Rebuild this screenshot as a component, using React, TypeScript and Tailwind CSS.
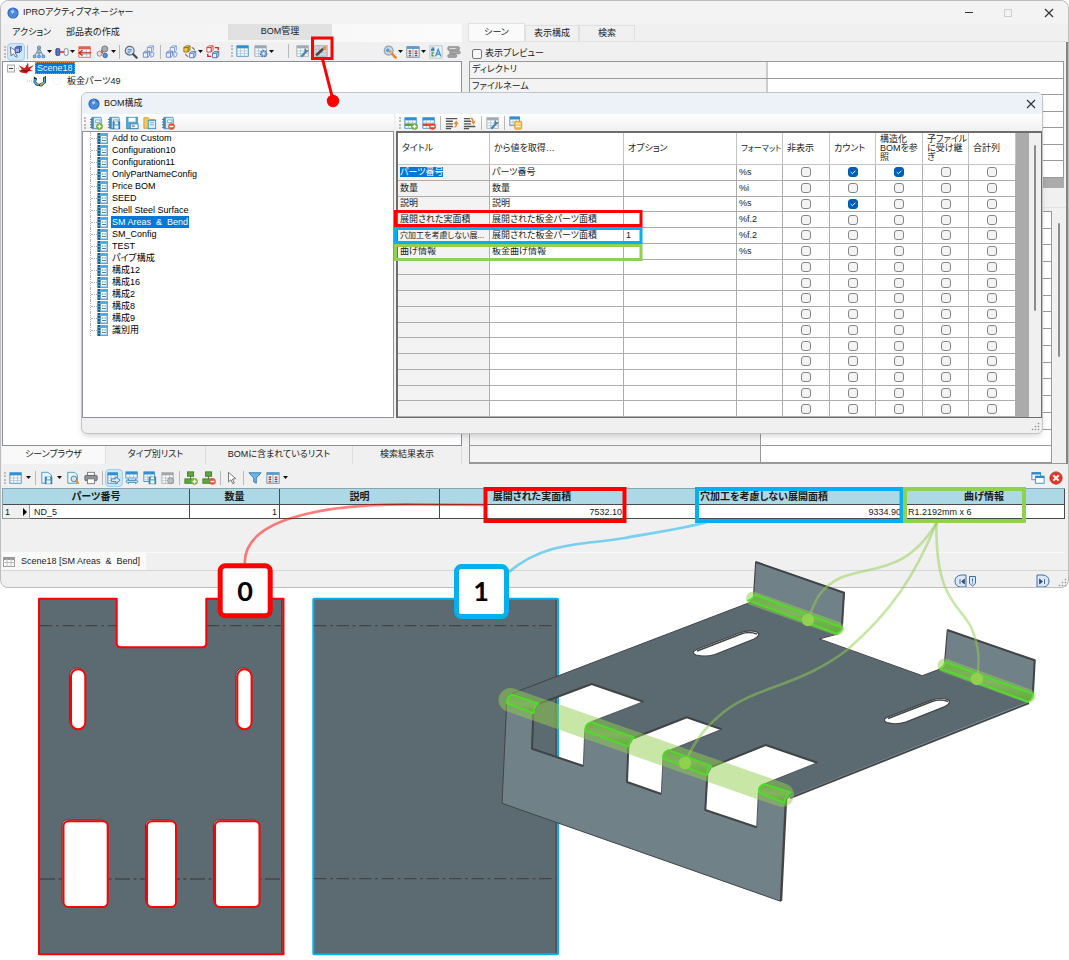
import React from "react";

type IconName =
  | "select" | "assembly" | "link" | "rowRed" | "gears" | "magnify" | "cubes" | "cubesYellow" | "cubesRed"
  | "table" | "tableGear" | "tableWrench" | "wand" | "searchColor" | "tableSort" | "abc" | "stack"
  | "bookAdd" | "bookSave" | "save" | "folderBook" | "bookDel"
  | "tableAdd" | "tableDel" | "moveUp" | "moveDown" | "tableCopy"
  | "saveTable" | "preview" | "print" | "export" | "tableWide" | "tableSave" | "tableGray"
  | "treeAdd" | "treeDel" | "cursor" | "filter" | "windows" | "closeRed";

const Grid = ({ c = "#2f8fd0", x = 1, y = 2, w = 13, h = 12 }) => (
  <g>
    <rect x={x} y={y} width={w} height={h} fill="#fff" stroke={c} />
    <rect x={x} y={y} width={w} height="3" fill={c} />
    <path d={`M${x} ${y + 6}h${w}M${x} ${y + 9}h${w}M${x + w / 3} ${y + 3}v${h - 3}M${x + (2 * w) / 3} ${y + 3}v${h - 3}`} stroke="#a9c4d8" fill="none" />
  </g>
);
const Badge = ({ c, plus = false }: { c: string; plus?: boolean }) => (
  <g>
    <circle cx="12" cy="12" r="3.8" fill={c} />
    <path d={plus ? "M9.8 12h4.4M12 9.8v4.4" : "M9.8 12h4.4"} stroke="#fff" strokeWidth="1.5" />
  </g>
);
const Book = () => (
  <g>
    <rect x="3" y="1.5" width="11" height="13" rx="1" fill="#d8ecf8" stroke="#3d8fc4" />
    <rect x="3" y="1.5" width="2.5" height="13" fill="#3d8fc4" />
    <path d="M1 4h3M1 7h3M1 10h3M1 13h3" stroke="#4b6a80" />
    <path d="M7.500 4.500h5v3h-5z" fill="#fff" stroke="#6caed8" />
  </g>
);
const Cube = ({ x, y, c, f = "#eef3fc" }: { x: number; y: number; c: string; f?: string }) => (
  <g stroke={c} fill={f} strokeLinejoin="round">
    <path d={`M${x} ${y + 2}l2-2h5l-2 2z`} />
    <path d={`M${x} ${y + 2}h5v5h-5z`} />
    <path d={`M${x + 5} ${y + 2}l2-2v5l-2 2z`} />
  </g>
);
const Floppy = ({ x, y, s = 8 }: { x: number; y: number; s?: number }) => (
  <g>
    <rect x={x} y={y} width={s} height={s} fill="#4a9fd6" stroke="#2b6f9f" />
    <rect x={x + 2} y={y} width={s - 4} height={s / 3} fill="#fff" />
    <rect x={x + 1.5} y={y + s / 2} width={s - 3} height={s / 2} fill="#e6f2fa" />
  </g>
);
const Wrench = () => (
  <g>
    <path d="M6 14.500l6-6.500" stroke="#4788b5" strokeWidth="2.600" />
    <path d="M11 9.500a3 3 0 0 1 0-5l1 2.500 2.500-.5a3 3 0 0 1-3.500 3z" fill="#5d7f96" />
  </g>
);

const icons: Record<IconName, React.ReactNode> = {
  select: (
    <g>
      <path d="M1.500 2.500l1 10 2.500-2.500 3 4 1.500-1-2.500-4 3.500-.5z" fill="#fff" stroke="#4f6076" />
      <Cube x={7} y={1.500} c="#2b46a4" f="#9fb2ea" />
    </g>
  ),
  assembly: (
    <g fill="none" stroke="#6b8fb0" strokeWidth="1.200">
      <path d="M8 3L3 13M8 3l5 10M8 3v10M5 9h6" />
      <g fill="#7fb1d8"><circle cx="8" cy="3" r="1.800" /><circle cx="3" cy="13" r="1.600" /><circle cx="8" cy="13" r="1.600" /><circle cx="13" cy="13" r="1.600" /></g>
    </g>
  ),
  link: (
    <g>
      <rect x="1" y="4" width="4.500" height="8" rx="1.500" fill="#5474c8" stroke="#30427a" />
      <path d="M5.500 8h5" stroke="#d0453b" strokeWidth="2" />
      <rect x="10.500" y="4" width="4.500" height="8" rx="2" fill="#eef1f7" stroke="#7a8696" />
    </g>
  ),
  rowRed: (
    <g>
      <Grid c="#e0604c" />
      <path d="M1 9h14M5 6l-4 3 4 3" stroke="#d02a1c" strokeWidth="1.600" fill="none" />
    </g>
  ),
  gears: (
    <g>
      <circle cx="10" cy="4.500" r="3.500" fill="#a9adb2" stroke="#6e7276" />
      <circle cx="4" cy="10" r="2.800" fill="#dfe3e8" stroke="#7b8794" />
      <circle cx="10.500" cy="12" r="2.500" fill="#5f93d6" stroke="#2d5b9e" />
      <path d="M6 6l2 4" stroke="#c9472e" strokeWidth="1.500" />
    </g>
  ),
  magnify: (
    <g>
      <circle cx="6.500" cy="6.500" r="5" fill="#dceefb" stroke="#5e6f80" strokeWidth="1.400" />
      <path d="M4 5h5M4 7h5M4 9h3" stroke="#4576aa" />
      <path d="M10.500 10.500l4 4" stroke="#3f4d5c" strokeWidth="2.600" strokeLinecap="round" />
    </g>
  ),
  cubes: (<g><Cube x={6} y={1} c="#7f9ad6" /><Cube x={1.500} y={7} c="#6484cb" /><path d="M10 8l4 1-1 4-3 1z" fill="#e3eafa" stroke="#7f9ad6" /></g>),
  cubesYellow: (<g><Cube x={1} y={1} c="#8c6d10" f="#f7cf3f" /><Cube x={7.500} y={7.500} c="#4e74c5" /><path d="M10 3q3 0 3 3M6 13q-3 0-3-3" stroke="#444" fill="none" /></g>),
  cubesRed: (<g><Cube x={1} y={1} c="#c8382c" f="#fff" /><Cube x={7.500} y={7.500} c="#3d63ba" /><path d="M10 3h4v3M6 13H2v-3" stroke="#d0281c" strokeWidth="1.500" fill="none" /></g>),
  table: <Grid />,
  tableGear: (
    <g>
      <Grid c="#9aa8b3" />
      <circle cx="11" cy="11" r="3.500" fill="#8fb2e0" stroke="#4e7ab5" strokeDasharray="2 1" strokeWidth="1.600" />
      <circle cx="11" cy="11" r="1.200" fill="#fff" />
    </g>
  ),
  tableWrench: (<g><Grid c="#a3abb2" /><Wrench /></g>),
  wand: (
    <g>
      <rect x="1" y="2" width="14" height="12" fill="#d3d8dc" stroke="#a0a7ad" />
      <path d="M1 6h14M1 10h14M6 2v12" stroke="#b7bec4" />
      <path d="M2.500 13L10.500 5.500" stroke="#44494d" strokeWidth="3" />
      <path d="M9.500 4l4.500-2-.5 4.500-2.500 1z" fill="#f08a2a" />
    </g>
  ),
  searchColor: (
    <g>
      <circle cx="6.500" cy="6.500" r="5" fill="#bfe0f6" stroke="#9ba7b2" strokeWidth="1.600" />
      <circle cx="5.500" cy="6" r="2" fill="#4c9bdc" /><circle cx="8" cy="7.500" r="1.800" fill="#f09a3a" />
      <path d="M10.500 10.500l4 4" stroke="#e08a2b" strokeWidth="2.800" strokeLinecap="round" />
    </g>
  ),
  tableSort: (
    <g>
      <rect x="1" y="2" width="14" height="12" fill="#f7fbfe" stroke="#6f8797" />
      <rect x="1" y="1.500" width="14" height="3" fill="#5b9bd0" />
      <path d="M8 4.500V14" stroke="#7f93a2" />
      <path d="M3 7h3M3 12h3" stroke="#c84c3c" strokeWidth="2" />
      <path d="M3 9.500h3M10 12h3" stroke="#37619c" strokeWidth="1.600" />
      <path d="M10 7h3M10 9.500h3" stroke="#a8383c" strokeWidth="1.600" />
    </g>
  ),
  abc: (
    <g fill="none">
      <rect x="1" y="1" width="14" height="14" fill="#eef3f7" stroke="#b4bdc5" />
      <path d="M7.500 13L10.500 5l3 8M8.500 10.500h4" stroke="#2f8fd8" strokeWidth="1.500" />
      <path d="M3 3.500h2.500v3H3V5h2.500" stroke="#3a75b8" strokeWidth="1.200" />
      <path d="M6 9H3.500v3.500H6" stroke="#4aa03a" strokeWidth="1.400" />
    </g>
  ),
  stack: (
    <g fill="#a8a8a8" stroke="#858585">
      <rect x="1" y="2" width="13" height="4" rx="1" /><rect x="3" y="7" width="12" height="3" rx="1" /><rect x="1" y="11" width="10" height="3" rx="1" />
      <path d="M3 4h7" stroke="#e6e6e6" />
    </g>
  ),
  bookAdd: (<g><Book /><Badge c="#6aa82e" plus /></g>),
  bookSave: (<g><Book /><Floppy x={7} y={7} s={7.500} /></g>),
  save: (<g><rect x="2" y="1.500" width="12" height="13" fill="#5aa9dc" stroke="#3480b4" /><rect x="4" y="2" width="8" height="4.500" fill="#fff" /><rect x="6" y="9" width="9" height="5.500" fill="#eaf4fb" stroke="#3480b4" /><path d="M8 11.500h3" stroke="#333" /></g>),
  folderBook: (<g><path d="M1 2h5l1.500 2H14v10H1z" fill="#f6c65b" stroke="#d59a2a" /><rect x="6" y="5" width="8.500" height="9.500" fill="#d8ecf8" stroke="#3d8fc4" /><path d="M8 7.500h4.500M8 10h4.500" stroke="#6caed8" /></g>),
  bookDel: (<g><Book /><Badge c="#dd5538" /></g>),
  tableAdd: (<g><Grid /><path d="M1 10h8" stroke="#58a22c" strokeWidth="3" /><Badge c="#6aa82e" plus /></g>),
  tableDel: (<g><Grid /><path d="M1 10h8" stroke="#e0452e" strokeWidth="3" /><Badge c="#e0452e" /></g>),
  moveUp: (<g><path d="M1 3h13M1 6h8M1 9h8M1 12h8M1 14.500h6" stroke="#555" strokeWidth="1.500" /><path d="M8 13q4 0 4-4h-2.500l3.500-4 2.500 4H14q0 5-6 4z" fill="#ee8a2c" /></g>),
  moveDown: (<g><path d="M1 3h7M1 6h8M1 9h8M1 12h13M1 14.500h6" stroke="#555" strokeWidth="1.500" /><path d="M8 2q4-1 4 4h2.500L12 10 9 6h1.500q0-2-2.500-4z" fill="#ee8a2c" /></g>),
  tableCopy: (<g><Grid w={11} h={10} x={1} y={1} /><rect x="6.500" y="6" width="8" height="9" rx="1" fill="#f8c257" stroke="#e09a2c" /><path d="M8 9h5M8 12h5" stroke="#fff" /></g>),
  saveTable: (<g><path d="M2 1.500h7l4 3V14H2z" fill="#e8f3fb" stroke="#3e93c8" /><Floppy x={6} y={7} s={7.500} /></g>),
  preview: (<g><path d="M2 1.500h8l3 3V14H2z" fill="#e8f3fb" stroke="#3e93c8" /><circle cx="9" cy="9" r="3.200" fill="#cfe7f7" stroke="#47769a" /><path d="M11 11l3.500 3.500" stroke="#e08a2b" strokeWidth="2" /></g>),
  print: (<g><rect x="4" y="1.500" width="8" height="4" fill="#fff" stroke="#777" /><rect x="1" y="5" width="14" height="6" rx="1" fill="#8d9297" stroke="#5f6468" /><rect x="4" y="9" width="8" height="5.500" fill="#fff" stroke="#777" /></g>),
  export: (<g><Grid w={11} /><path d="M5 9h5V6.500l5 4-5 4V12H5z" fill="#d8ecf9" stroke="#2b7fb8" /></g>),
  tableWide: (<g><Grid h={7} y={1} /><path d="M1 12l3-2.500V11h8V9.500l3 2.500-3 2.500V13H4v1.500z" fill="#d8ecf9" stroke="#2b7fb8" /></g>),
  tableSave: (<g><Grid w={12} h={11} y={1} /><Floppy x={7} y={7} s={7.500} /></g>),
  tableGray: (<g><Grid c="#a6a6a6" /><circle cx="11" cy="11" r="3.500" fill="#bdbdbd" stroke="#8f8f8f" /></g>),
  treeAdd: (<g><rect x="4" y="1" width="7" height="5" fill="#5da83c" stroke="#3d7c24" /><path d="M7.500 6v3" stroke="#555" /><rect x="1" y="9" width="12" height="5" fill="#5da83c" stroke="#3d7c24" /><Badge c="#7cb52e" plus /></g>),
  treeDel: (<g><rect x="4" y="1" width="7" height="5" fill="#5da83c" stroke="#3d7c24" /><path d="M7.500 6v3" stroke="#555" /><rect x="1" y="9" width="12" height="5" fill="#5da83c" stroke="#3d7c24" /><Badge c="#e25a3c" /></g>),
  cursor: <path d="M4 1.500v11l2.800-2.500 2 4.500 1.800-.8-2-4.500 3.700-.4z" fill="#fff" stroke="#666" />,
  filter: <path d="M1 2h14l-5.500 6v6l-3-1.500V8z" fill="#6fb4e2" stroke="#2d7db5" />,
  windows: (<g><rect x="1" y="2" width="10" height="8" fill="#fff" stroke="#2b8bc8" /><rect x="1" y="1.500" width="10" height="2.500" fill="#2b8bc8" /><rect x="5" y="6" width="10" height="8" fill="#fff" stroke="#2b8bc8" /><rect x="5" y="5.500" width="10" height="2.500" fill="#2b8bc8" /></g>),
  closeRed: (<g><circle cx="8" cy="8" r="7" fill="#e23a2c" stroke="#b5281c" /><path d="M5 5l6 6M11 5l-6 6" stroke="#fff" strokeWidth="2.400" /></g>),
};

const Icon = ({ name, className = "size-[14px]" }: { name: IconName; className?: string }) => (
  <svg viewBox="0 0 16 16" className={className} aria-hidden="true">{icons[name]}</svg>
);

const Tool = ({ name, label, caret, wide, active }: { name: IconName; label: string; caret?: boolean; wide?: boolean; active?: boolean }) => (
  <button
    type="button"
    aria-label={label}
    className={`flex h-[18px] shrink-0 items-center ${active ? "-mx-px rounded-sm border border-[#a5cdec] bg-[#cde6f9]" : ""}`}
  >
    <span className="flex w-4 justify-center"><Icon name={name} /></span>
    {caret && (
      <span className={`flex justify-center ${wide ? "w-2" : "w-[5px]"}`}>
        <svg viewBox="0 0 5 3" className="h-[3px] w-[5px]" aria-hidden="true"><path d="M0 0h5L2.500 3z" fill="#111" /></svg>
      </span>
    )}
  </button>
);
const Sep = ({ className = "mx-px" }: { className?: string }) => <span className={`h-3.5 w-px shrink-0 bg-[#b9b9b9] ${className}`} />;
const Handle = () => <span className="h-3 w-0.5 shrink-0 border-l-2 border-dotted border-[#bcbcbc]" />;

const Globe = () => (
  <svg viewBox="0 0 14 14" className="size-3 shrink-0" aria-hidden="true">
    <circle cx="7" cy="7" r="6.500" fill="#2c63b8" />
    <path d="M2 5l4-4 4 2 3 4-3 5-5 1-3-4z" fill="#4b8ae0" />
    <path d="M4 4l4-1 1 3-3 2z" fill="#b4d5fa" />
    <path d="M2 5l8-2M5 13l5-10" stroke="#3567b5" strokeWidth=".5" fill="none" />
  </svg>
);
const Close = () => (
  <svg viewBox="0 0 10 10" className="size-2.5" aria-hidden="true"><path d="M1 1l8 8M9 1L1 9" stroke="#333" strokeWidth="1.200" /></svg>
);
const Grip = () => (
  <svg viewBox="0 0 9 9" className="size-[9px]" aria-hidden="true">
    <path d="M7 1h1v1H7zM4 4h1v1H4zM7 4h1v1H7zM1 7h1v1H1zM4 7h1v1H4zM7 7h1v1H7z" fill="#888" stroke="#999" strokeWidth=".5" />
  </svg>
);
const NotebookIcon = () => (
  <svg viewBox="0 0 11 11" className="size-[11px] shrink-0" aria-hidden="true">
    <rect width="11" height="11" fill="#57abd9" />
    <rect x="4" y="3" width="5.500" height="6.500" fill="#fff" />
    <path d="M2 0v11" stroke="#173b57" strokeWidth="1.500" strokeDasharray="2 1" />
    <path d="M5 5h1.500M7.500 5H9M5 7.500h4" stroke="#5b7f99" />
  </svg>
);

const configs = [
  "Add to Custom", "Configuration10", "Configuration11", "OnlyPartNameConfig", "Price BOM", "SEED",
  "Shell Steel Surface", "SM Areas  &  Bend", "SM_Config", "TEST", "パイプ構成", "構成12", "構成16",
  "構成2", "構成8", "構成9", "識別用",
];

type Column = { title: string; source: string; option: string; format: string; checks: number[] };
const columns: Column[] = [
  { title: "パーツ番号", source: "パーツ番号", option: "", format: "%s", checks: [1, 2] },
  { title: "数量", source: "数量", option: "", format: "%i", checks: [] },
  { title: "説明", source: "説明", option: "", format: "%s", checks: [1] },
  { title: "展開された実面積", source: "展開された板金パーツ面積", option: "", format: "%f.2", checks: [] },
  { title: "穴加工を考慮しない展...", source: "展開された板金パーツ面積", option: "1", format: "%f.2", checks: [] },
  { title: "曲げ情報", source: "板金曲げ情報", option: "", format: "%s", checks: [] },
  ...Array.from({ length: 10 }, () => ({ title: "", source: "", option: "", format: "", checks: [] })),
];
const flags = ["非表示", "カウント", "構造化BOMを参照", "子ファイルに受け継ぎ", "合計列"];

const Check = ({ label, checked }: { label: string; checked: boolean }) => (
  <span className="grid place-items-center">
    <input
      type="checkbox"
      aria-label={label}
      defaultChecked={checked}
      className="peer col-start-1 row-start-1 size-2.5 appearance-none rounded-[3px] border border-[#858585] bg-[#f4f4f4] checked:border-[#005fb8] checked:bg-[#005fb8]"
    />
    <svg viewBox="0 0 10 10" className="pointer-events-none invisible col-start-1 row-start-1 size-2.5 peer-checked:visible" aria-hidden="true">
      <path d="M2.800 5.200l1.600 1.500 3-3" stroke="#fff" fill="none" />
    </svg>
  </span>
);

function ConfigTable() {
  const head = "border-r border-b border-[#c4c4c4] py-0 pr-0 pl-1 text-left align-middle font-normal";
  const cell = "overflow-hidden border-r border-b border-[#adadad] px-0.5 py-0 whitespace-nowrap";
  return (
    <table className="h-[284px] w-[618px] table-fixed border-separate border-spacing-0 bg-white leading-[9px]">
      <colgroup>
        <col className="w-[92px]" /><col className="w-[134px]" /><col className="w-[113px]" /><col className="w-[46px]" />
        <col className="w-[47px]" /><col className="w-[46px]" /><col className="w-[47px]" /><col className="w-[46px]" /><col className="w-[47px]" />
      </colgroup>
      <thead>
        <tr className="h-8">
          <th className={head}>タイトル</th>
          <th className={head}>から値を取得…</th>
          <th className={head}>オプション</th>
          <th className={`${head} text-[8px] whitespace-nowrap`}>フォーマット</th>
          {flags.map((f) => <th key={f} className={head}>{f}</th>)}
        </tr>
      </thead>
      <tbody>
        {columns.map((c, i) => (
          <tr key={i}>
            <td className={`${cell} bg-[#f3f3f3] ${c.title.length > 8 ? "text-[8px]" : ""}`}>
              <span className={i === 0 ? "bg-[#0078d7] text-white" : ""}>{c.title}</span>
            </td>
            <td className={cell}>{c.source}</td>
            <td className={cell}>{c.option}</td>
            <td className={cell}>{c.format}</td>
            {flags.map((f, j) => (
              <td key={f} className={cell}><Check label={f} checked={c.checks.includes(j)} /></td>
            ))}
          </tr>
        ))}
      </tbody>
    </table>
  );
}

function BomDialog() {
  return (
    <section
      aria-label="BOM構成"
      className="absolute top-[91px] left-20 z-10 w-[962px] overflow-hidden rounded-md border border-[#c3c6c9] bg-[#f0f0f0] shadow-md"
    >
      <header className="flex h-[21px] items-center gap-1 bg-[#edf2f8] px-1.5">
        <Globe />
        <h2 className="grow">BOM構成</h2>
        <button type="button" aria-label="閉じる"><Close /></button>
      </header>
      <div className="flex">
        <div className="w-[312px] shrink-0">
          <div className="flex h-[17px] items-center gap-0.5 bg-linear-to-b from-white to-[#f0f0f0] pl-0.5">
            <Handle />
            <Tool name="bookAdd" label="追加" />
            <Tool name="bookSave" label="構成を保存" />
            <Tool name="save" label="保存" />
            <Tool name="folderBook" label="開く" />
            <Tool name="bookDel" label="削除" />
          </div>
          <div className="h-[287px] border border-[#8f949c] bg-white pl-[7px]">
            <ul className="text-black">
              {configs.map((c, i) => (
                <li key={c} className="flex h-3 items-center">
                  <span className="flex h-full w-[7px] items-center border-l border-dotted border-[#b0b0b0]"><span className="w-full border-t border-dotted border-[#b0b0b0]" /></span>
                  <NotebookIcon />
                  <span className={`ml-[3px] px-px leading-3 whitespace-pre ${i === 7 ? "bg-[#0078d7] text-white" : ""}`}>{c}</span>
                </li>
              ))}
            </ul>
          </div>
        </div>
        <div className="ml-0.5 min-w-0 grow">
          <div className="flex h-[17px] items-center gap-0.5 bg-linear-to-b from-white to-[#f0f0f0] pl-[3px]">
            <Handle />
            <Tool name="tableAdd" label="行を追加" />
            <Tool name="tableDel" label="行を削除" />
            <Sep />
            <Tool name="moveUp" label="上へ" />
            <Tool name="moveDown" label="下へ" />
            <Sep />
            <Tool name="tableWrench" label="設定" />
            <Sep />
            <Tool name="tableCopy" label="コピー" />
          </div>
          <div className="flex h-[287px] overflow-hidden border-t-2 border-r border-b border-l-2 border-[#6d6d6d] bg-[#ababab]">
            <ConfigTable />
            <div className="ml-auto flex w-3 justify-center bg-[#f0f0f0] pt-3">
              <span className="h-[166px] w-0.5 rounded bg-[#8b8b8b]" />
            </div>
          </div>
        </div>
      </div>
      <footer className="flex h-[15px] items-end justify-end p-0.5"><Grip /></footer>
    </section>
  );
}

function LeftPane() {
  const tab = "flex items-center justify-center border-r border-[#dedede]";
  return (
    <div className="flex w-[460px] shrink-0 flex-col">
      <nav className="flex h-[18px] items-center bg-linear-to-r from-[#f0f0f0] to-[#fbfbfb]">
        <div className="flex w-[226px] items-center gap-[15px] pl-2.5">
          <button type="button">アクション</button>
          <button type="button">部品表の作成</button>
        </div>
        <button type="button" className="h-4 w-[104px] self-start bg-[#e1e1e1]">BOM管理</button>
      </nav>
      <div className="flex h-[19px] items-center gap-0.5 bg-[#f0f0f0] pl-0.5">
        <Handle />
        <Tool name="select" label="選択" active />
        <Sep />
        <Tool name="assembly" label="アセンブリ" caret />
        <Tool name="link" label="リンク" caret />
        <Tool name="rowRed" label="行" />
        <Tool name="gears" label="部品" caret />
        <Sep />
        <Tool name="magnify" label="検索" />
        <Tool name="cubes" label="複製" />
        <Sep />
        <Tool name="cubes" label="形状" />
        <Tool name="cubesYellow" label="置換" caret />
        <Tool name="cubesRed" label="入替" />
        <div className="ml-2 flex items-center gap-0.5 self-start">
          <Handle />
          <Tool name="table" label="BOM表" />
          <Tool name="tableGear" label="BOM設定" caret />
          <Sep className="mr-1 ml-3" />
          <Tool name="tableWrench" label="表の設定" />
          <Tool name="wand" label="BOM構成" />
        </div>
        <div className="ml-auto flex items-center gap-0.5">
          <Tool name="searchColor" label="色検索" caret />
          <Tool name="tableSort" label="並べ替え" caret />
          <Tool name="abc" label="名前" />
          <Tool name="stack" label="一覧" />
        </div>
      </div>
      <div className="grow border border-[#8a8f98] bg-white pl-1">
        <div className="flex h-3 items-center">
          <svg viewBox="0 0 28 12" className="h-3 w-7" aria-hidden="true">
            <rect x=".5" y="3" width="7" height="7" fill="#f4f4f4" stroke="#aaa" /><path d="M2 6.500h4" stroke="#444" />
            <path d="M9 6.500h3" stroke="#bbb" strokeDasharray="1 1" />
            <path d="M11.500 3l4.500 2.500 2 .5L21 .5l.5 5L27 3l-4.500 4.500L26 9l-5 .5-1 2-6-1-2.500-2 4-.5z" fill="#d31a1a" />
            <path d="M14 8l5 1.500 4-2" stroke="#6a0c0c" fill="none" />
          </svg>
          <span className="border border-dotted border-[#e08a3a] bg-[#0078d7] px-px leading-[10px] text-[#e8f4ff]">Scene18</span>
        </div>
        <div className="flex h-3.5 items-center pl-5">
          <svg viewBox="0 0 22 12" className="h-3 w-[22px]" aria-hidden="true">
            <path d="M0 6h5" stroke="#bbb" strokeDasharray="1 1" />
            <path d="M7 1.500l3 2-1 3.500 3 2 4-2V2.500L19 1v6.500L14.500 11.500 9 10.500 6.500 7.500z" fill="#222" />
            <path d="M8 4v4l4 2M17.500 2.500v4.500l-4 3.500" stroke="#49b3e0" strokeWidth="1.500" fill="none" /><path d="M13 10l4-2.500" stroke="#e89a2b" strokeWidth="1.500" />
          </svg>
          <span className="ml-1 size-2 rounded-full border border-dotted border-[#dde9ef]" />
          <span className="ml-1.5 leading-3">板金パーツ49</span>
        </div>
      </div>
      <div className="flex h-[18px]">
        <button type="button" className={`${tab} w-[104px] bg-[#f9f9f9]`}>シーンブラウザ</button>
        <button type="button" className={`${tab} w-[100px]`}>タイプ別リスト</button>
        <button type="button" className={`${tab} w-[147px]`}>BOMに含まれているリスト</button>
        <button type="button" className={`${tab} grow`}>検索結果表示</button>
      </div>
    </div>
  );
}

function RightPane() {
  const tab = "border border-b-0 border-[#e0e0e0]";
  const props = ["ディレクトリ", "ファイルネーム", "", "", "", "", ""];
  return (
    <div className="ml-1.5 flex min-w-0 grow flex-col border-r-2 border-[#858585]">
      <div className="-mr-0.5 flex h-[18px] items-end border-b border-[#e2e2e2] bg-[#f0f0f0]">
        <button type="button" className={`${tab} h-[18px] w-[57px] bg-[#fafafa]`}>シーン</button>
        <button type="button" className={`${tab} h-4 w-[54px]`}>表示構成</button>
        <button type="button" className={`${tab} h-4 w-14`}>検索</button>
      </div>
      <label className="flex h-[19px] items-center gap-[3px] pt-1 pl-1">
        <input type="checkbox" className="size-2.5 appearance-none rounded-[2px] border border-[#777] bg-[#f7f7f7]" />
        表示プレビュー
      </label>
      <div className="mr-0.5 ml-px grid h-[117px] auto-rows-fr border-t border-r border-l border-[#999]">
        {props.map((p, i) => (
          <div key={i} className="flex items-center border-b border-[#999]">
            <span className="h-full w-[298px] shrink-0 border-r-2 border-[#ccc] bg-[#f3f3f3] pt-px pl-0.5">{p}</span>
            <span className="h-full grow bg-white" />
          </div>
        ))}
      </div>
      <div className="mr-0.5 ml-px h-2.5 bg-[#ababab]" />
      <div className="mt-[19px] flex h-1 border-t border-[#e2e2e2]" />
      <div className="ml-px flex border-b border-[#999]">
        <div className="grid h-[252px] grow auto-rows-fr border-t border-l border-[#999]">
          {Array.from({ length: 15 }, (_, i) => (
            <div key={i} className="flex border-b border-[#999]">
              <span className="w-[291px] shrink-0 border-r border-[#999] bg-[#f3f3f3]" />
              <span className="grow border-r border-[#999] bg-white" />
            </div>
          ))}
        </div>
        <div className="flex w-3.5 justify-center bg-[#f0f0f0] pt-3">
          <span className="h-[134px] w-0.5 rounded bg-[#8b8b8b]" />
        </div>
      </div>
    </div>
  );
}

function BottomPane() {
  const th = "border-r border-b border-[#4a4a4a] p-0 text-center text-[10px] leading-3 font-bold";
  const td = "border-r border-b border-[#4a4a4a] bg-white px-0.5 py-0";
  return (
    <div>
      <div className="flex h-[21px] items-center gap-0.5 pr-1 pl-0.5">
        <Handle />
        <Tool name="table" label="表" caret wide />
        <Sep />
        <Tool name="saveTable" label="保存" caret wide />
        <Tool name="preview" label="プレビュー" />
        <Tool name="print" label="印刷" />
        <Sep />
        <Tool name="export" label="書き出し" active />
        <Tool name="tableWide" label="幅調整" />
        <Tool name="tableSave" label="表を保存" />
        <Tool name="tableGray" label="更新" />
        <Sep />
        <Tool name="treeAdd" label="部品を追加" />
        <Tool name="treeDel" label="部品を削除" />
        <Sep />
        <Tool name="cursor" label="選択" />
        <Sep />
        <Tool name="filter" label="フィルター" />
        <Tool name="tableSort" label="並べ替え" caret wide />
        <div className="ml-auto flex gap-0.5">
          <Tool name="windows" label="ウィンドウ" />
          <Tool name="closeRed" label="閉じる" />
        </div>
      </div>
      <div className="mr-[3px] h-[65px] border-b border-[#fafafa]">
        <table className="w-full table-fixed border-separate border-spacing-0 border-t border-l border-[#8aa4ad]">
          <colgroup>
            <col className="w-[27px]" /><col className="w-40" /><col className="w-[90px]" /><col className="w-40" />
            <col className="w-[185px]" /><col className="w-[279px]" /><col />
          </colgroup>
          <thead className="bg-[#add8e6]">
            <tr className="h-4">
              <th colSpan={2} className={th}>パーツ番号</th>
              <th className={th}>数量</th>
              <th className={th}>説明</th>
              <th className={th}>展開された実面積</th>
              <th className={th}>穴加工を考慮しない展開面積</th>
              <th className={th}>曲げ情報</th>
            </tr>
          </thead>
          <tbody>
            <tr className="h-3.5 leading-3">
              <td className="border-r border-b border-[#999] bg-[#f0f0f0] px-0.5 py-0">
                <span className="flex items-center justify-between">
                  1
                  <svg viewBox="0 0 4 8" className="h-2 w-1" aria-hidden="true"><path d="M0 0l4 4-4 4z" /></svg>
                </span>
              </td>
              <td className="border-r border-b border-[#4a4a4a] bg-white px-1 py-0">ND_5</td>
              <td className={`${td} text-right`}>1</td>
              <td className={td} />
              <td className={`${td} text-right`}>7532.10</td>
              <td className={`${td} text-right`}>9334.90</td>
              <td className={`${td} pl-1`}>R1.2192mm x 6</td>
            </tr>
          </tbody>
        </table>
      </div>
      <div className="flex h-[18px] border-b border-[#d5d5d5]">
        <button type="button" className="flex items-center gap-1.5 bg-[#fafafa] pr-1.5 pl-px">
          <svg viewBox="0 0 12 10" className="h-2.5 w-3" aria-hidden="true">
            <rect x=".5" y=".5" width="11" height="9" fill="#fff" stroke="#999" /><path d="M0 2h12" stroke="#999" strokeWidth="2" /><path d="M0 5.500h12M4 2v8M8 2v8" stroke="#bbb" />
          </svg>
          <span className="whitespace-pre">Scene18 [SM Areas  &  Bend]</span>
        </button>
      </div>
      <footer className="flex h-4 items-end justify-end gap-0.5 pr-px">
        <svg viewBox="0 0 24 13" className="h-[13px] w-6" aria-hidden="true">
          <path d="M12 1H7Q1 2 1 7t5 6h6z" fill="#dbe8f7" stroke="#3f6cae" />
          <path d="M6 5v5M10.500 5L7.500 7.500l3 2.500z" fill="#334f80" stroke="#334f80" strokeWidth=".8" />
          <path d="M15.500 2.500h6v7l-3 2.500-3-2.500z" fill="#dbe8f7" stroke="#3f6cae" /><path d="M18.500 4.500v3M18.500 8.500v1" stroke="#3f6cae" />
        </svg>
        <svg viewBox="0 0 14 13" className="ml-14 h-[13px] w-3.5" aria-hidden="true">
          <path d="M1 1h6q6 1 6 6t-5 6H1z" fill="#dbe8f7" stroke="#3f6cae" />
          <path d="M3.500 5l3 2.500-3 2.500zM8.500 5v5" fill="#334f80" stroke="#334f80" strokeWidth=".8" />
        </svg>
        <span className="ml-1.5"><Grip /></span>
      </footer>
    </div>
  );
}

const holes = [
  { x: 71, y: 669.3, w: 14.3, h: 60, r: 7 }, { x: 237.3, y: 669.3, w: 14.3, h: 60, r: 7 },
  { x: 63.5, y: 821.3, w: 44.2, h: 85.7, r: 5 }, { x: 147, y: 821.3, w: 29, h: 85.7, r: 5 }, { x: 215, y: 821.3, w: 44.5, h: 85.7, r: 5 },
];
const bends = [
  "M507 703.500Q506.500 697 512 694.700L538.500 703.500Q534 706 533.500 713.300Z",
  "M585.300 731Q584.500 724.500 591 722L634 737.300Q629.500 740 629 746.700Z",
  "M663 758.500Q662.500 752 668.500 750L711.300 766Q707 768.500 706.700 775Z",
  "M758.700 792.500Q758 786 764 784L790.700 792.300Q785.500 795.500 784.500 802.700Z",
];
const flangeBends = [
  "M748 600.300Q753 599 754.500 594.500L842 627.500Q842.500 632 836 633.500Z",
  "M940 668.500Q944 667 945 662L1033 694Q1033 700 1027.500 701.700Z",
];
const slot = "M696.500 649.500L740 632.800Q749 629.500 757 632Q761.500 635 754 639L715 654.500Q705 657.500 696 655Q690.500 652.500 696.500 649.500Z";
const cutouts =
  "M538.300 704L591.700 684L643.300 701.700L593 721Q585 725 584.700 731.700L583.300 766L532 748.700L533.300 713.300Z" +
  "M633.300 738.300L686.700 717.300L721.700 729.300L670 750Q663.300 753 663 758.300L661.300 794L627 782L628.300 746.700Z" +
  "M711.700 766.700L765.700 745L817.300 762.700L768 782.300Q759 786 758.300 793.300L756.700 827.300L705.300 810L707.300 775Z";

function PartDrawing() {
  const edge = "#414548";
  return (
    <svg viewBox="0 588 1069 372" className="pointer-events-none relative z-20 block h-[372px] w-[1069px] overflow-visible" role="img" aria-label="板金パーツの展開図と曲げ">
      <defs>
        <linearGradient id="bend" x1="0" y1="0" x2="0" y2="1"><stop offset="0" stopColor="#4f8f45" /><stop offset=".5" stopColor="#72986a" /><stop offset="1" stopColor="#37862f" /></linearGradient>
        <mask id="plate" maskUnits="userSpaceOnUse" x="30" y="590" width="260" height="370">
          <rect x="30" y="590" width="260" height="370" fill="#fff" />
          {holes.map((h) => <rect key={h.x} x={h.x} y={h.y} width={h.w} height={h.h} rx={h.r} fill="#000" />)}
        </mask>
        <mask id="openings" maskUnits="userSpaceOnUse" x="490" y="550" width="560" height="370">
          <rect x="490" y="550" width="560" height="370" fill="#fff" />
          <path d={cutouts + slot} fill="#000" />
          <path d={slot} transform="translate(190.800 67.600)" fill="#000" />
        </mask>
      </defs>

      <g mask="url(#plate)">
        <path d="M39 598.700H116.700V643q0 4.300 4.300 4.300h81q4.300 0 4.300-4.300V598.700H283.500V954.300H39Z" fill="#5c6b71" />
        {holes.map((h) => <rect key={h.x} x={h.x - 1.5} y={h.y - 1.5} width={h.w} height={h.h} rx={h.r} fill="#fff" fillOpacity=".5" stroke={edge} />)}
        <path d="M40 625.700H116M207 625.700H281" stroke={edge} strokeWidth="1.300" fill="none" strokeDasharray="12.500 3.500 3 3.500" />
        <path d="M281.700 600V953" stroke={edge} />
        <path d="M40 879H281" stroke={edge} strokeWidth="1.300" strokeDasharray="15 3.500 3 3.500" />
      </g>
      <g fill="none" stroke="#f00" strokeWidth="2" strokeLinejoin="round">
        <path d="M39 598.700H116.700V643q0 4.300 4.300 4.300h81q4.300 0 4.300-4.300V598.700H283.500V954.300H39Z" />
        {holes.map((h) => <rect key={h.x} x={h.x} y={h.y} width={h.w} height={h.h} rx={h.r} />)}
      </g>

      <rect x="313.300" y="598.700" width="244.700" height="355.600" rx="1" fill="#5c6b71" stroke="#00b0f0" strokeWidth="2" />
      <path d="M556 600V953" stroke={edge} />
      <path d="M314 625.700H556M314 878.700H556" stroke={edge} strokeWidth="1.300" strokeDasharray="12.500 3.500 3 3.500" />

      <g stroke={edge} strokeLinejoin="round">
        <path d="M755.700 562L844 592.700L841.700 629L753.500 597Z" fill="#708187" strokeWidth="1.200" />
        <path d="M947.300 630L1034.700 660.300L1032.700 696L944.500 664Z" fill="#708187" strokeWidth="1.200" />
        <path d="M755.700 562L844 592.700L842 626M947.300 630L1034.700 660.300L1033 693" fill="none" strokeWidth="2" />
        <g mask="url(#openings)">
          <path fill="#708187" d="M506.700 703.300Q506 696 512 694L786 797L780.700 901.300L502 803.300Z" />
          <path fill="#5b6a71" stroke="none" d="M507 700Q507 695 512 693.500L752 601.700L840 633L819 639L922.300 675.700L940 669L1029 701.700L790 797L786 800L783 792Z" />
        </g>
        <path fill="none" d="M512 693.500L752 601.700M838 634L819 639L824 640.500L922.300 675.700L940 669" />
        <path fill="none" strokeWidth="2.200" d="M1029 703L790 798" /><path d="M1027 702.700L790 797" stroke="#75868d" strokeWidth=".7" />
        <path fill="none" strokeWidth="2.400" d="M786 799L781 901" />
        <path fill="none" strokeWidth="2" d="M538.300 704L591.700 684L643.300 701.700M583.300 766L532 748.700L533.300 713.300M633.300 738.300L686.700 717.300L721.700 729.300M661.300 794L627 782L628.300 746.700M711.700 766.700L765.700 745L817.300 762.700M756.700 827.300L705.300 810L707.300 775" />
        <path d={cutouts} fill="none" strokeWidth=".8" />
        <path d={slot} fill="none" strokeWidth="1.200" />
        <path d={slot} transform="translate(190.800 67.600)" fill="none" strokeWidth="1.200" />
        <path fill="none" strokeWidth="1.600" d="M697 651L741 634Q749 631 757 634M888 718.500L932 701.500Q940 698.500 948 701.500" />
      </g>

      <g fill="url(#bend)" stroke="#35e316" strokeWidth="1.600" strokeLinejoin="round">
        {bends.map((d) => <path key={d} d={d} />)}
        {flangeBends.map((d) => <path key={d} d={d} />)}
      </g>
      <g stroke="#92d050" strokeOpacity=".5" strokeLinecap="round" fill="none">
        <path d="M510.500 700L782 795" strokeWidth="24" />
        <path d="M753 598.500L837 628.500M944.500 665.500L1028.500 696" strokeWidth="14" />
        <path d="M936.500 523C905 575 870 565 840 578C820 588 815 600 808 620" strokeWidth="2.600" strokeLinecap="butt" />
        <path d="M936.500 523C915 575 893 610 847 650C800 686 760 685 725 711C705 727 695 740 685 763" strokeWidth="2.600" strokeLinecap="butt" />
        <path d="M936.500 523C935 600 960 605 971 627C979 645 980 660 977 679" strokeWidth="2.600" strokeLinecap="butt" />
      </g>
      <g fill="none" stroke="#3ce51e" strokeWidth="1.100" strokeLinejoin="round">
        {bends.map((d) => <path key={d} d={d} />)}
        <path d="M748 600.300L836 633M754.500 595L842 627M940 668.500L1027.500 701M945 662.500L1033 694" />
      </g>
      <g fill="#92d050"><circle cx="808" cy="620" r="6.200" /><circle cx="685" cy="763" r="6.200" /><circle cx="977" cy="679" r="6.200" /></g>

      <path d="M244.800 563C244 520 320 503 420 504.500L484 505" stroke="#f00" strokeOpacity=".5" strokeWidth="2.700" fill="none" />
      <path d="M509 572C545 541 585 545 625 538S690 527 707 522" stroke="#00b0f0" strokeOpacity=".5" strokeWidth="2.700" fill="none" />

      <g fill="none" strokeWidth="3">
        <rect x="312.500" y="38" width="19.500" height="20.500" stroke="#f00" />
        <rect x="395.500" y="211.500" width="245.500" height="14" stroke="#f00" />
        <rect x="395.500" y="228.500" width="245.500" height="14" stroke="#00b0f0" />
        <rect x="395.500" y="245.500" width="245.500" height="14" stroke="#92d050" />
      </g>
      <path d="M322.500 59L333 100" stroke="#f00" strokeWidth="3" /><circle cx="333" cy="101" r="6.200" fill="#f00" />
      <g fill="none" strokeWidth="4">
        <rect x="485.500" y="489" width="139" height="32" stroke="#f00" />
        <rect x="697" y="489" width="204.500" height="32" stroke="#00b0f0" />
        <rect x="905" y="489" width="119" height="32" stroke="#92d050" />
      </g>

      <g fill="#fff" strokeWidth="5">
        <rect x="220.200" y="565.800" width="50" height="50" rx="5" stroke="#f00" />
        <rect x="456.500" y="566.500" width="50" height="50" rx="5" stroke="#00b0f0" />
      </g>
      <g className="font-[Lato,sans-serif] text-[27px] font-bold" fill="#000" textAnchor="middle">
        <text x="245" y="601">0</text>
        <text x="481" y="601">1</text>
      </g>
    </svg>
  );
}

export default function App() {
  return (
    <main className="overflow-x-clip bg-white font-['Liberation_Sans','Noto_Sans_CJK_JP',sans-serif] text-[9px] text-[#1a1a1a] [font-feature-settings:'palt']">
      <div className="relative rounded-lg border border-[#bdbdbd] bg-[#f0f0f0]">
        <header className="flex h-[23px] items-center gap-1 rounded-t-lg bg-[#f3f3f3] pr-3.5 pl-1.5">
          <Globe />
          <h1 className="grow">IPROアクティブマネージャー</h1>
          <button type="button" aria-label="最小化" className="mr-[27px] h-px w-2 bg-[#333]" />
          <button type="button" aria-label="最大化" className="mr-7 size-2 border border-[#cfcfcf]" />
          <button type="button" aria-label="閉じる"><Close /></button>
        </header>
        <div className="flex pl-px">
          <LeftPane />
          <RightPane />
        </div>
        <div className="pt-[3px] pl-px"><BottomPane /></div>
        <BomDialog />
      </div>
      <PartDrawing />
    </main>
  );
}
